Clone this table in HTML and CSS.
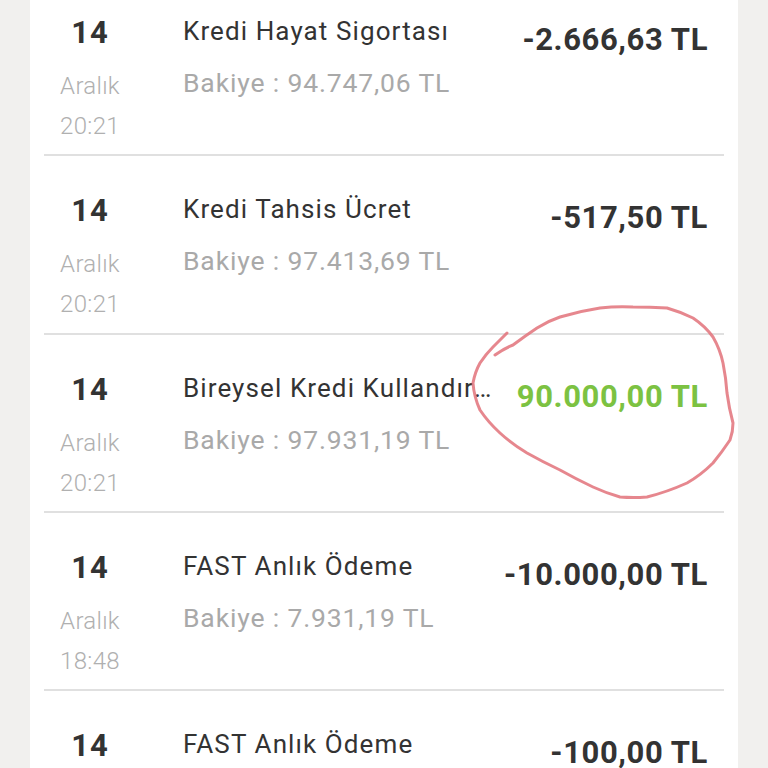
FILE: index.html
```html
<!DOCTYPE html>
<html lang="tr">
<head>
<meta charset="utf-8">
<title>Hesap Hareketleri</title>
<link rel="stylesheet" href="styles.css">
</head>
<body>
<div class="page">
  <div class="card">
    <div class="list">
      <div class="row">
        <div class="date"><div class="day">14</div><div class="month">Aralık</div><div class="time">20:21</div></div>
        <div class="info"><div class="title">Kredi Hayat Sigortası</div><div class="balance">Bakiye : 94.747,06 TL</div></div>
        <div class="amount">-2.666,63 TL</div>
      </div>
      <div class="row">
        <div class="date"><div class="day">14</div><div class="month">Aralık</div><div class="time">20:21</div></div>
        <div class="info"><div class="title">Kredi Tahsis Ücret</div><div class="balance">Bakiye : 97.413,69 TL</div></div>
        <div class="amount">-517,50 TL</div>
      </div>
      <div class="row">
        <div class="date"><div class="day">14</div><div class="month">Aralık</div><div class="time">20:21</div></div>
        <div class="info"><div class="title">Bireysel Kredi Kullandırım</div><div class="balance">Bakiye : 97.931,19 TL</div></div>
        <div class="amount positive">90.000,00 TL</div>
      </div>
      <div class="row">
        <div class="date"><div class="day">14</div><div class="month">Aralık</div><div class="time">18:48</div></div>
        <div class="info"><div class="title">FAST Anlık Ödeme</div><div class="balance">Bakiye : 7.931,19 TL</div></div>
        <div class="amount">-10.000,00 TL</div>
      </div>
      <div class="row">
        <div class="date"><div class="day">14</div><div class="month">Aralık</div><div class="time">18:47</div></div>
        <div class="info"><div class="title">FAST Anlık Ödeme</div><div class="balance">Bakiye : 17.931,19 TL</div></div>
        <div class="amount">-100,00 TL</div>
      </div>
    </div>
  </div>
  <svg class="scribble" width="768" height="768" viewBox="0 0 768 768" aria-hidden="true">
    <path d="M495 355 Q505 348 513 345 Q525 336 537 328 Q548 321 560 317 Q580 311 600 308 Q617 306 633 307 Q650 307 667 308 Q681 312 693 318 Q705 326 713 337 Q720 349 723 363 Q726 378 727 393 Q729 408 733 423 Q733 432 730 440 Q722 452 713 463 Q701 475 687 483 Q667 492 647 497 Q633 498 620 497 Q606 493 593 487 Q576 479 560 470 Q543 462 527 453 Q512 444 500 433 Q488 422 480 410 Q474 397 473 383 Q475 372 480 363 Q486 354 493 347 Q500 340 507 333" />
  </svg>
</div>
</body>
</html>
```

FILE: styles.css
```css
html, body {
  margin: 0;
  padding: 0;
  background: #f1f0ee;
}
.page {
  position: relative;
  width: 768px;
  height: 768px;
  overflow: hidden;
  font-family: Roboto, "Liberation Sans", Arial, sans-serif;
}
.card {
  display: flow-root;
  margin: 0 30px;
  height: 768px;
  background: #ffffff;
  padding: 0 14px;
  box-sizing: border-box;
}
.list {
  margin-top: -22px;
}
.row {
  display: flex;
  align-items: flex-start;
  height: 178.3px;
  box-sizing: border-box;
  border-bottom: 2px solid #e0e0e0;
  padding-right: 16px;
}
.date {
  width: 92px;
  flex: none;
  text-align: center;
  padding-top: 35px;
}
.day {
  font-size: 31px;
  font-weight: 700;
  line-height: 40px;
  letter-spacing: 1px;
  color: #333333;
}
.month, .time {
  font-size: 24px;
  font-weight: 300;
  line-height: 40px;
  letter-spacing: 0.3px;
  color: #b0b0b0;
}
.month {
  margin-top: 13px;
}
.info {
  flex: 1;
  min-width: 0;
  margin-left: 47px;
  padding-top: 33px;
}
.title {
  font-size: 26px;
  line-height: 40px;
  letter-spacing: 1.1px;
  color: #333333;
  white-space: nowrap;
  overflow: hidden;
  text-overflow: ellipsis;
}
.balance {
  margin-top: 12px;
  font-size: 26.5px;
  line-height: 40px;
  letter-spacing: 0.85px;
  color: #a9a9a9;
  white-space: nowrap;
}
.amount {
  flex: none;
  margin-left: 20px;
  padding-top: 42px;
  font-size: 31px;
  font-weight: 700;
  line-height: 40px;
  letter-spacing: 0.6px;
  color: #333333;
  white-space: nowrap;
}
.amount.positive {
  color: #7cc242;
}
.scribble {
  position: absolute;
  top: 0;
  left: 0;
  pointer-events: none;
}
.scribble path {
  fill: none;
  stroke: #e2727a;
  stroke-opacity: 0.85;
  stroke-width: 3;
  stroke-linecap: round;
  stroke-linejoin: round;
}
```
